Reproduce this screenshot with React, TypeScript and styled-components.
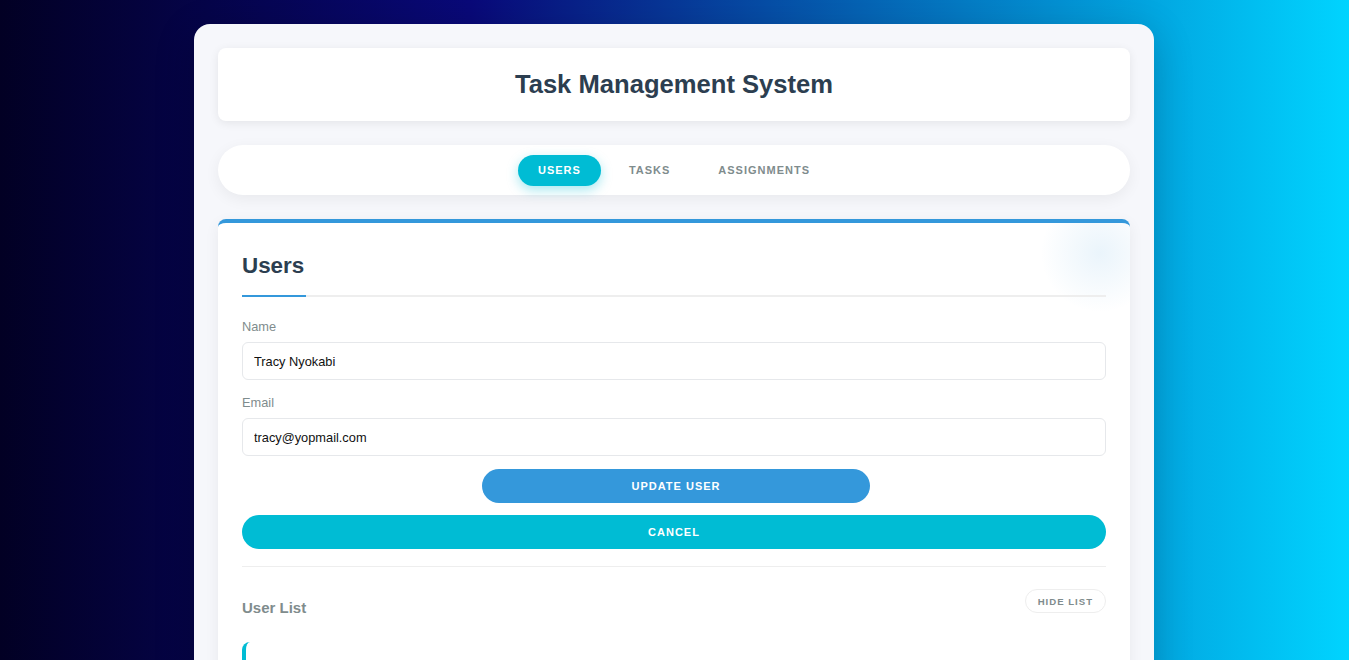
import React, { useState } from "react";
import styled, { createGlobalStyle } from "styled-components";

const GlobalStyle = createGlobalStyle`
    * {
        box-sizing: border-box;
    }

    body {
        margin: 0;
        font-family: "Liberation Sans", Arial, sans-serif;
        background: linear-gradient(90deg, #020024 0%, #090979 35%, #00d4ff 100%);
        min-height: 100vh;
    }
`;

interface User {
    id: number;
    name: string;
    email: string;
}

const users: User[] = [
    { id: 1, name: "Tracy Nyokabi", email: "tracy@yopmail.com" },
    { id: 2, name: "John Kamau", email: "john@yopmail.com" },
];

const tabs = ["Users", "Tasks", "Assignments"];

export default function App() {
    const [activeTab, setActiveTab] = useState("Users");
    const [name, setName] = useState("Tracy Nyokabi");
    const [email, setEmail] = useState("tracy@yopmail.com");
    const [showList, setShowList] = useState(true);

    return (
        <>
            <GlobalStyle />
            <Page>
                <Container>
                    <Header>
                        <Title>Task Management System</Title>
                    </Header>

                    <Nav>
                        {tabs.map(tab => (
                            <Tab key={tab} active={tab === activeTab} onClick={() => setActiveTab(tab)}>
                                {tab}
                            </Tab>
                        ))}
                    </Nav>

                    <Card>
                        <SectionTitle>Users</SectionTitle>

                        <Field>
                            <Label>Name</Label>
                            <Input value={name} onChange={e => setName(e.target.value)} />
                        </Field>

                        <Field>
                            <Label>Email</Label>
                            <Input value={email} onChange={e => setEmail(e.target.value)} />
                        </Field>

                        <PrimaryButton>Update User</PrimaryButton>
                        <CancelButton>Cancel</CancelButton>

                        <Divider />

                        <ListHeader>
                            <ListTitle>User List</ListTitle>
                            <SmallButton onClick={() => setShowList(s => !s)}>
                                {showList ? "Hide List" : "Show List"}
                            </SmallButton>
                        </ListHeader>

                        {showList && (
                            <List>
                                {users.map(user => (
                                    <ListItem key={user.id}>
                                        <ItemName>{user.name}</ItemName>
                                        <ItemEmail>{user.email}</ItemEmail>
                                    </ListItem>
                                ))}
                            </List>
                        )}
                    </Card>
                </Container>
            </Page>
        </>
    );
}

const Page = styled.div`
    padding: 24px 1px 40px 0;
    display: flex;
    justify-content: center;
`;

const Container = styled.div`
    width: 960px;
    background: #f6f7fb;
    border-radius: 16px;
    padding: 24px;
    display: flex;
    flex-direction: column;
    gap: 24px;
    box-shadow: 0 10px 40px rgba(0, 0, 0, 0.2);
`;

const Header = styled.header`
    background: #ffffff;
    border-radius: 8px;
    height: 73px;
    display: flex;
    align-items: center;
    justify-content: center;
    box-shadow: 0 2px 10px rgba(0, 0, 0, 0.08);
`;

const Title = styled.h1`
    margin: 0;
    font-size: 25.6px;
    font-weight: 700;
    color: #2c3e50;
`;

const Nav = styled.nav`
    background: #ffffff;
    border-radius: 25px;
    height: 50px;
    display: flex;
    align-items: center;
    justify-content: center;
    gap: 8px;
    box-shadow: 0 4px 15px rgba(0, 0, 0, 0.06);
`;

const Tab = styled.button<{ active: boolean }>`
    border: none;
    cursor: pointer;
    font-family: inherit;
    font-size: 11px;
    font-weight: 700;
    letter-spacing: 1px;
    text-transform: uppercase;
    height: 31px;
    padding: 0 20px;
    border-radius: 16px;
    background: ${p => (p.active ? "#00bcd4" : "transparent")};
    color: ${p => (p.active ? "#ffffff" : "#7f8c8d")};
    box-shadow: ${p => (p.active ? "0 4px 12px rgba(0, 188, 212, 0.35)" : "none")};
`;

const Card = styled.section`
    position: relative;
    overflow: hidden;
    background: #ffffff;
    border-radius: 8px;
    border-top: 4px solid #3498db;
    padding: 24px 24px 24px;
    display: flex;
    flex-direction: column;
    box-shadow: 0 4px 15px rgba(0, 0, 0, 0.06);

    &::before {
        content: "";
        position: absolute;
        top: -30px;
        right: -30px;
        width: 120px;
        height: 120px;
        border-radius: 50%;
        background: radial-gradient(circle, rgba(52, 152, 219, 0.1) 0%, rgba(52, 152, 219, 0) 70%);
        pointer-events: none;
    }
`;

const SectionTitle = styled.h2`
    position: relative;
    margin: 0 0 22px;
    padding: 6px 0 16px;
    font-size: 22.4px;
    font-weight: 700;
    color: #2c3e50;
    border-bottom: 2px solid #eeeeee;

    &::after {
        content: "";
        position: absolute;
        left: 0;
        bottom: -2px;
        width: 64px;
        height: 2px;
        background: #3498db;
    }
`;

const Field = styled.div`
    display: flex;
    flex-direction: column;
    gap: 8px;
    margin-bottom: 15px;
`;

const Label = styled.label`
    font-size: 12.8px;
    color: #7f8c8d;
`;

const Input = styled.input`
    height: 38px;
    border: 1px solid #e6e8eb;
    border-radius: 6px;
    padding: 0 11px;
    font-family: inherit;
    font-size: 12.8px;
    color: #111111;
    outline: none;
`;

const PillButton = styled.button`
    border: none;
    cursor: pointer;
    height: 34px;
    border-radius: 17px;
    color: #ffffff;
    font-family: inherit;
    font-size: 11px;
    font-weight: 700;
    letter-spacing: 1px;
    text-transform: uppercase;
`;

const PrimaryButton = styled(PillButton)`
    align-self: center;
    width: 388px;
    margin-top: -2px;
    margin-left: 4px;
    background: #3498db;
`;

const CancelButton = styled(PillButton)`
    margin-top: 12px;
    background: #00bcd4;
`;

const Divider = styled.hr`
    border: none;
    border-top: 1px solid #eeeeee;
    margin: 17px 0 22px;
    width: 100%;
`;

const ListHeader = styled.div`
    display: flex;
    justify-content: space-between;
    align-items: flex-start;
`;

const ListTitle = styled.h3`
    margin: 10px 0 0;
    font-size: 15px;
    font-weight: 700;
    color: #7f8c8d;
`;

const SmallButton = styled.button`
    height: 24px;
    padding: 0 12px;
    border: 1px solid #eeeeee;
    border-radius: 12px;
    background: #ffffff;
    color: #7f8c8d;
    cursor: pointer;
    font-family: inherit;
    font-size: 9.6px;
    font-weight: 700;
    letter-spacing: 1px;
    text-transform: uppercase;
`;

const List = styled.ul`
    list-style: none;
    margin: 26px 0 0;
    padding: 0;
    display: flex;
    flex-direction: column;
    gap: 12px;
`;

const ListItem = styled.li`
    background: #ffffff;
    border-left: 4px solid #00bcd4;
    border-radius: 8px;
    padding: 30px 16px 16px;
    display: flex;
    flex-direction: column;
    gap: 4px;
`;

const ItemName = styled.span`
    font-size: 14px;
    font-weight: 700;
    color: #2c3e50;
`;

const ItemEmail = styled.span`
    font-size: 12.8px;
    color: #7f8c8d;
`;
